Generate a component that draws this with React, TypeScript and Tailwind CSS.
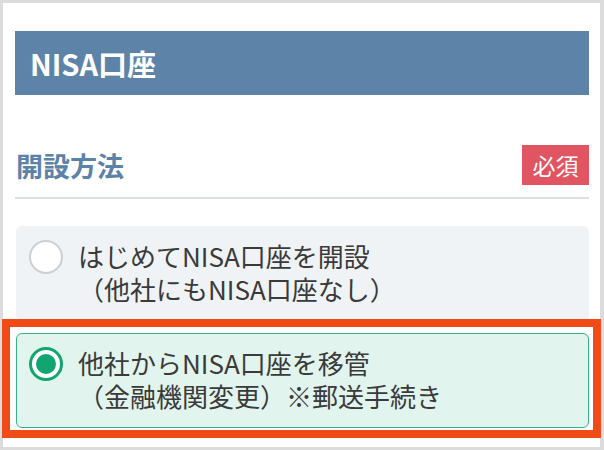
import React, { useState } from 'react';

const jp = { fontFamily: '"Noto Sans CJK JP", "Noto Sans", sans-serif' };

type Option = { id: string; line1: string; line2: string };

const options: Option[] = [
  { id: 'new', line1: 'はじめてNISA口座を開設', line2: '（他社にもNISA口座なし）' },
  { id: 'transfer', line1: '他社からNISA口座を移管', line2: '（金融機関変更）※郵送手続き' },
];

const Radio: React.FC<{ checked: boolean }> = ({ checked }) =>
  checked ? (
    <span className="w-[34px] h-[34px] shrink-0 rounded-full border-[3px] border-[#11a56f] bg-white flex items-center justify-center">
      <span className="block w-[20px] h-[20px] rounded-full bg-[#11a56f]" />
    </span>
  ) : (
    <span className="block w-[34px] h-[34px] shrink-0 rounded-full border-2 border-[#cfcfcf] bg-white" />
  );

export default function App() {
  const [selected, setSelected] = useState('transfer');

  return (
    <div className="w-[604px] h-[450px] bg-[#dcdcdc] p-[3px] pr-[4px] overflow-hidden" style={jp}>
      <div className="h-full bg-white pl-[12px] pr-[11px] pt-[28px]">
        {/* Header */}
        <div className="h-[64px] bg-[#5d84a8] flex items-center pl-[15px]">
          <h1 className="text-[29px] font-bold text-white leading-none">NISA口座</h1>
        </div>

        {/* Section title */}
        <div className="mt-[50px] flex items-center justify-between">
          <h2 className="text-[27px] font-bold text-[#5b82a8] leading-none pl-[1px]">開設方法</h2>
          <span className="h-[40px] w-[67px] bg-[#e05561] text-white text-[23px] flex items-center justify-center leading-none">
            必須
          </span>
        </div>
        <div className="mt-[12px] border-b-2 border-[#dde0e4]" />

        {/* Options */}
        <div className="mt-[27px] pl-[1px] flex flex-col gap-[12px]">
          {options.map(o => {
            const checked = selected === o.id;
            const box = (
              <button
                onClick={() => setSelected(o.id)}
                className={`w-full text-left flex items-start gap-[15px] rounded-md pl-[12px] pt-[12px] pb-[15px] ${
                  checked
                    ? 'bg-[#e2f4ee] border border-[#35b08a]'
                    : 'bg-[#eff3f5] border border-[#eff3f5]'
                }`}
              >
                <span className="block shrink-0 mt-[1px]">
                  <Radio checked={checked} />
                </span>
                <span className="block text-[26px] leading-[33px] text-[#3a3a3a]">
                  <span className="block">{o.line1}</span>
                  <span className="block">{o.line2}</span>
                </span>
              </button>
            );
            return checked ? (
              <div
                key={o.id}
                className="relative z-10 -mt-[14px] -mb-[10px] -ml-[14px] -mr-[12px] border-[8px] border-[#f04a16] bg-white pt-[6px] pb-[2px] pl-[6px] pr-[4px]"
              >
                {box}
              </div>
            ) : (
              <div key={o.id}>{box}</div>
            );
          })}
        </div>
      </div>
    </div>
  );
}
